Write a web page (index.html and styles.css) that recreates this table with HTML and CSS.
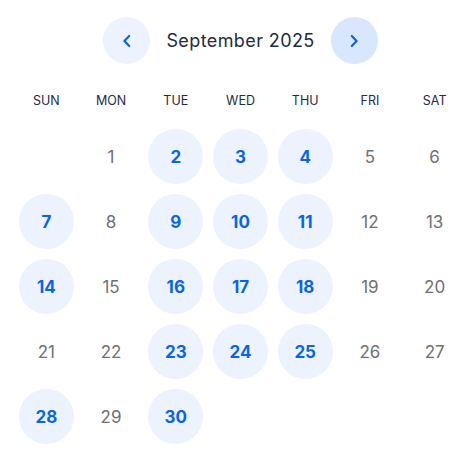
FILE: index.html
```html
<!DOCTYPE html>
<html>
<head>
<meta charset="utf-8">
<link rel="stylesheet" href="styles.css">
</head>
<body>
<div class="cal">
  <div class="head">
    <button class="nav prev" aria-label="Previous month">
      <svg width="14" height="14" viewBox="0 0 14 14"><path d="M9.2 2 L4.4 7 L9.2 12" fill="none" stroke="#0a64e8" stroke-width="2.2" stroke-linecap="round" stroke-linejoin="round"/></svg>
    </button>
    <div class="title">September 2025</div>
    <button class="nav next" aria-label="Next month">
      <svg width="14" height="14" viewBox="0 0 14 14"><path d="M4.8 2 L9.6 7 L4.8 12" fill="none" stroke="#0a64e8" stroke-width="2.2" stroke-linecap="round" stroke-linejoin="round"/></svg>
    </button>
  </div>
  <div class="dow">
    <span>SUN</span><span>MON</span><span>TUE</span><span>WED</span><span>THU</span><span>FRI</span><span>SAT</span>
  </div>
  <div class="grid">
    <span class="d"></span>
    <span class="d">1</span>
    <span class="d on">2</span>
    <span class="d on">3</span>
    <span class="d on">4</span>
    <span class="d">5</span>
    <span class="d">6</span>
    <span class="d on">7</span>
    <span class="d">8</span>
    <span class="d on">9</span>
    <span class="d on">10</span>
    <span class="d on">11</span>
    <span class="d">12</span>
    <span class="d">13</span>
    <span class="d on">14</span>
    <span class="d">15</span>
    <span class="d on">16</span>
    <span class="d on">17</span>
    <span class="d on">18</span>
    <span class="d">19</span>
    <span class="d">20</span>
    <span class="d">21</span>
    <span class="d">22</span>
    <span class="d on">23</span>
    <span class="d on">24</span>
    <span class="d on">25</span>
    <span class="d">26</span>
    <span class="d">27</span>
    <span class="d on">28</span>
    <span class="d">29</span>
    <span class="d on">30</span>
  </div>
</div>
</body>
</html>
```
FILE: styles.css
```css
html, body {
  margin: 0;
  padding: 0;
  background: #ffffff;
  overflow: hidden;
}
body {
  font-family: "Inter", "Open Sans", sans-serif;
}
.cal {
  width: 453px;
  margin-left: 14px;
  padding-top: 17px;
}
.head {
  display: flex;
  justify-content: center;
  align-items: center;
  gap: 16px;
  height: 47px;
}
.nav {
  width: 47px;
  height: 47px;
  border-radius: 50%;
  border: none;
  padding: 0;
  display: flex;
  align-items: center;
  justify-content: center;
  cursor: pointer;
}
.prev { background: #ecf3fe; }
.next { background: #d8e7fe; }
.title {
  font-size: 18px;
  color: #1d2b45;
  letter-spacing: 0.4px;
}
.dow {
  display: grid;
  grid-template-columns: repeat(7, 1fr);
  margin-top: 27px;
  height: 20px;
  line-height: 20px;
  font-size: 12.5px;
  color: #1d2b45;
  text-align: center;
  margin-bottom: 13px;
}
.grid {
  display: grid;
  grid-template-columns: repeat(7, 1fr);
  grid-auto-rows: 65px;
}
.d {
  display: flex;
  align-items: center;
  justify-content: center;
  font-size: 17px;
  color: #707070;
}
.d.on {
  width: 55px;
  height: 55px;
  border-radius: 50%;
  background: #ecf3fe;
  color: #0a64e8;
  font-weight: 700;
  justify-self: center;
  align-self: center;
}
```
